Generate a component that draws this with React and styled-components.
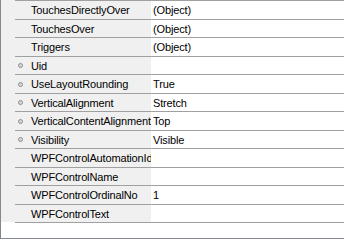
import React from "react";
import styled, { createGlobalStyle } from "styled-components";

const GlobalStyle = createGlobalStyle`
	html, body {
		margin: 0;
		padding: 0;
		background: #ffffff;
	}
`;

// outer frame of the property grid, only left and bottom edges show
const Frame = styled.div`
	width: 344px;
	height: 239px;
	box-sizing: border-box;
	border-left: 1px solid #828790;
	border-bottom: 1px solid #828790;
	background: #ffffff;
	overflow: hidden;
	font-family: "Liberation Sans", Arial, sans-serif;
	font-size: 11px;
	letter-spacing: -0.15px;
	color: #000000;
`;

const List = styled.div`
	display: flex;
	flex-direction: column;
`;

const Row = styled.div`
	display: grid;
	grid-template-columns: 14px 136px 1fr;
	height: 18.5px;
	background: #f0f0f0;
`;

const Margin = styled.div`
	background: #f0f0f0;
`;

const NameCell = styled.div`
	display: flex;
	align-items: center;
	border-top: 1px solid #a0a0a0;
	background: #f0f0f0;
	padding: 1px 0 0 3px;
	white-space: nowrap;
	overflow: hidden;
	min-width: 0;
`;

const IconSlot = styled.span`
	width: 13px;
	flex: none;
	display: flex;
	align-items: center;
`;

const Dot = styled.span`
	width: 5px;
	height: 5px;
	box-sizing: border-box;
	border-radius: 50%;
	border: 1px solid #8f8f8f;
	background: #d4d4d4;
`;

const ValueCell = styled.div`
	display: flex;
	align-items: center;
	border-top: 1px solid #a0a0a0;
	background: #ffffff;
	padding: 1px 0 0 2px;
	white-space: nowrap;
	overflow: hidden;
`;

const BottomRule = styled.div`
	margin-left: 14px;
	border-top: 1px solid #a0a0a0;
`;

const props = [
	["TouchesDirectlyOver", "(Object)", false],
	["TouchesOver", "(Object)", false],
	["Triggers", "(Object)", false],
	["Uid", "", true],
	["UseLayoutRounding", "True", true],
	["VerticalAlignment", "Stretch", true],
	["VerticalContentAlignment", "Top", true],
	["Visibility", "Visible", true],
	["WPFControlAutomationId", "", false],
	["WPFControlName", "", false],
	["WPFControlOrdinalNo", "1", false],
	["WPFControlText", "", false],
];

const App = () => {
	return (
		<>
			<GlobalStyle />
			<Frame>
				<List>
					{props.map(([name, value, dot]) => (
						<Row key={name}>
							<Margin />
							<NameCell>
								<IconSlot>{dot && <Dot />}</IconSlot>
								{name}
							</NameCell>
							<ValueCell>{value}</ValueCell>
						</Row>
					))}
					<BottomRule />
				</List>
			</Frame>
		</>
	);
};

export default App;
